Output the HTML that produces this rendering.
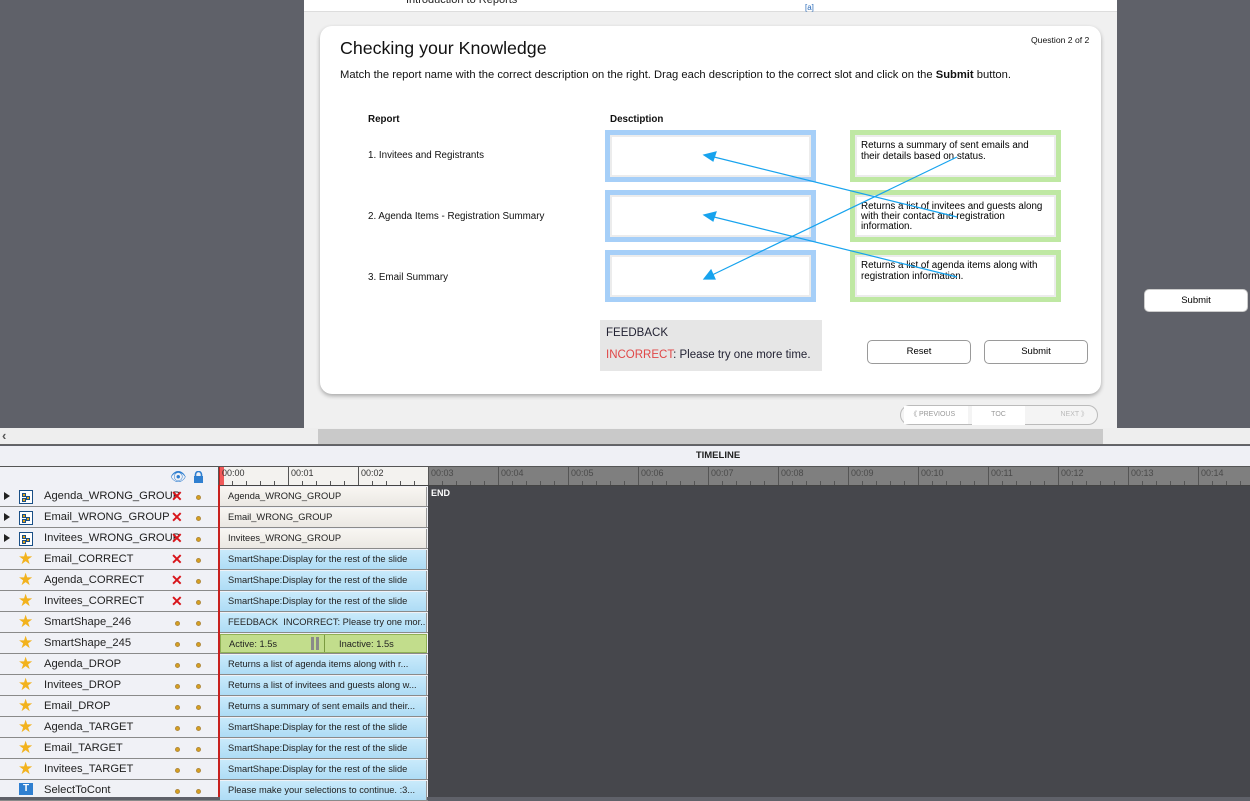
<!DOCTYPE html>
<html><head><meta charset="utf-8"><style>
*{margin:0;padding:0;box-sizing:border-box}
body{width:1250px;height:797px;overflow:hidden;background:#5f6169;font-family:"Liberation Sans",sans-serif;position:relative}
.a{position:absolute}
.row{position:absolute;left:0;width:428px;height:21px;border-bottom:1px solid #8a8a8a}
.nm{position:absolute;left:44px;top:4px;font-size:11.2px;color:#222;white-space:nowrap}
.bar{position:absolute;left:220px;width:207px;top:1px;height:19px;font-size:9.3px;color:#222;padding:4px 0 0 8px;white-space:nowrap;overflow:hidden;border-right:1px solid #999}
.g{background:linear-gradient(#f8f6f2,#ebe8e3)}
.b{background:linear-gradient(#c9eafb,#aedcf5)}
.x{position:absolute;left:171px;top:2px;color:#d8151b;font-size:14px;font-weight:bold}
.d{position:absolute;width:5px;height:5px;border-radius:50%;background:#d9a11d;top:9px;border:1px solid #b08a40}
.st{position:absolute;left:18px;top:1px;color:#f2b21d;font-size:17px;line-height:18px}
.gi{position:absolute;left:19px;top:4px;width:14px;height:14px;border:1.5px solid #1a4f86;background:#fff}
.gi i{position:absolute;width:4px;height:4px;background:#e3a618;border:1px solid #1a4f86}
.tri{position:absolute;left:4px;top:6px;width:0;height:0;border-left:6px solid #222;border-top:4.5px solid transparent;border-bottom:4.5px solid transparent}
.slot{position:absolute;border:5px solid #a6cff8;background:#fff;box-shadow:inset 0 0 0 2px #ececec}
.drag{position:absolute;border:5px solid #bfe8a3;background:#fff;box-shadow:inset 0 0 0 2px #ececec;font-size:9.8px;line-height:11px;color:#000;padding:5px 6px}
.btn{position:absolute;height:24px;border:1px solid #9a9a9a;border-radius:5px;background:#fff;font-size:9.5px;text-align:center;line-height:21px}
</style></head><body>
<div class="a" style="left:304px;top:0;width:813px;height:428px;background:#f0f0f0"></div>
<div class="a" style="left:304px;top:0;width:813px;height:12px;background:#fff;border-bottom:1px solid #ddd"></div>
<div class="a" style="left:406px;top:-6px;font-size:11px;color:#222">Introduction to Reports</div>
<div class="a" style="left:805px;top:3px;font-size:8px;color:#2a6ab8">[a]</div>
<div class="a" style="left:320px;top:26px;width:781px;height:368px;background:#fff;border-radius:12px;box-shadow:0 2px 4px rgba(0,0,0,.3)"></div>
<div class="a" style="left:340px;top:38px;font-size:17.8px;color:#111">Checking your Knowledge</div>
<div class="a" style="left:1031px;top:35px;font-size:8.6px;color:#111">Question 2 of 2</div>
<div class="a" style="left:340px;top:69px;font-size:11.2px;color:#111">Match the report name with the correct description on the right. Drag each description to the correct slot and click on the <b>Submit</b> button.</div>
<div class="a" style="left:368px;top:114px;font-size:9.8px;font-weight:bold;color:#111">Report</div>
<div class="a" style="left:610px;top:114px;font-size:9.8px;font-weight:bold;color:#111">Desctiption</div>
<div class="a" style="left:368px;top:150px;font-size:9.8px;color:#111">1. Invitees and Registrants</div>
<div class="a" style="left:368px;top:211px;font-size:9.8px;color:#111">2. Agenda Items - Registration Summary</div>
<div class="a" style="left:368px;top:272px;font-size:9.8px;color:#111">3. Email Summary</div>
<div class="slot" style="left:605px;top:130px;width:211px;height:52px"></div>
<div class="slot" style="left:605px;top:190px;width:211px;height:52px"></div>
<div class="slot" style="left:605px;top:250px;width:211px;height:52px"></div>
<div class="drag" style="left:850px;top:130px;width:211px;height:52px;padding-right:16px">Returns a summary of sent emails and their details based on status.</div>
<div class="drag" style="left:850px;top:190px;width:211px;height:52px;padding-top:7px;line-height:10px">Returns a list of invitees and guests along with their contact and registration information.</div>
<div class="drag" style="left:850px;top:250px;width:211px;height:52px;padding-right:12px">Returns a list of agenda items along with registration information.</div>
<svg class="a" style="left:0;top:0" width="1250" height="430">
<g stroke="#17a3ee" stroke-width="1.2" fill="#17a3ee">
<line x1="957" y1="217" x2="710" y2="156"/><polygon points="704,155 716,152 713,161"/>
<line x1="957" y1="277" x2="710" y2="216"/><polygon points="704,215 716,212 713,221"/>
<line x1="957" y1="157" x2="710" y2="276"/><polygon points="704,279 711,270 715,279"/>
</g></svg>
<div class="a" style="left:600px;top:320px;width:222px;height:51px;background:#e6e6e6"></div>
<div class="a" style="left:606px;top:327px;font-size:11.5px;color:#223">FEEDBACK</div>
<div class="a" style="left:606px;top:349px;font-size:11.5px;color:#223"><span style="color:#e04848">INCORRECT</span>: Please try one more time.</div>
<div class="btn" style="left:867px;top:340px;width:104px">Reset</div>
<div class="btn" style="left:984px;top:340px;width:104px">Submit</div>
<div class="btn" style="left:1144px;top:289px;width:104px;height:23px;border-color:#ccc">Submit</div>
<div class="a" style="left:900px;top:405px;width:198px;height:20px;border:1px solid #bbb;border-radius:10px;background:#f4f4f4"></div>
<div class="a" style="left:904px;top:406px;width:64px;height:18px;background:#fff;font-size:7px;color:#999;line-height:18px;padding-left:6px">《 PREVIOUS</div>
<div class="a" style="left:972px;top:406px;width:53px;height:19px;background:#fff;font-size:7px;color:#999;line-height:18px;text-align:center">TOC</div>
<div class="a" style="left:1030px;top:406px;width:64px;height:18px;font-size:7px;color:#bbb;line-height:18px;text-align:right;padding-right:6px">NEXT 》</div>
<div class="a" style="left:0;top:428px;width:1250px;height:17px;background:#eeeeee;border-bottom:1px solid #666"></div>
<div class="a" style="left:318px;top:429px;width:785px;height:15px;background:#c9c9c9"></div>
<div class="a" style="left:2px;top:428px;font-size:13px;color:#555;font-weight:bold">‹</div>
<div class="a" style="left:0;top:446px;width:1250px;height:21px;background:#eff0f5;border-bottom:1px solid #555"></div>
<div class="a" style="left:0;top:450px;width:1250px;text-align:center;font-size:9.5px;font-weight:bold;color:#222;padding-left:186px">TIMELINE</div>
<div class="a" style="left:0;top:467px;width:218px;height:330px;background:#f0f1f6"></div>
<div class="a" style="left:218px;top:467px;width:210px;height:330px;background:#f0f1f6"></div>
<div class="a" style="left:428px;top:467px;width:822px;height:330px;background:#46474c"></div>
<div class="a" style="left:218px;top:467px;width:210px;height:19px;background:#f3f2ef;border-bottom:1px solid #444"></div>
<div class="a" style="left:428px;top:467px;width:822px;height:19px;background:#7f7f7f;border-bottom:1px solid #444"></div>
<div class="a" style="left:219px;top:467px;width:5px;height:18px;background:#f05a5a"></div>
<div class="a" style="left:170px;top:470px;color:#2f7fd0;font-size:13px;line-height:13px">&#x1F441;&#xFE0E;</div>
<svg class="a" style="left:193px;top:471px" width="11" height="12"><path d="M2.5 5V3.5a3 3 0 0 1 6 0V5" stroke="#2f7fd0" stroke-width="1.6" fill="none"/><rect x="1" y="5" width="9" height="7" fill="#2f7fd0"/></svg>
<div class="a" style="left:431px;top:488px;font-size:9px;font-weight:bold;color:#fff">END</div>

<div class="row" style="top:486px"><div class="tri"></div><div class="gi"><i style="left:2px;top:2px"></i><i style="left:6px;top:5px"></i><i style="left:2px;top:7px"></i></div><div class="nm">Agenda_WRONG_GROUP</div><div class="x">✕</div><div class="d" style="left:196px"></div><div class="bar g">Agenda_WRONG_GROUP</div></div>
<div class="row" style="top:507px"><div class="tri"></div><div class="gi"><i style="left:2px;top:2px"></i><i style="left:6px;top:5px"></i><i style="left:2px;top:7px"></i></div><div class="nm">Email_WRONG_GROUP</div><div class="x">✕</div><div class="d" style="left:196px"></div><div class="bar g">Email_WRONG_GROUP</div></div>
<div class="row" style="top:528px"><div class="tri"></div><div class="gi"><i style="left:2px;top:2px"></i><i style="left:6px;top:5px"></i><i style="left:2px;top:7px"></i></div><div class="nm">Invitees_WRONG_GROUP</div><div class="x">✕</div><div class="d" style="left:196px"></div><div class="bar g">Invitees_WRONG_GROUP</div></div>
<div class="row" style="top:549px"><div class="st">★</div><div class="nm">Email_CORRECT</div><div class="x">✕</div><div class="d" style="left:196px"></div><div class="bar b">SmartShape:Display for the rest of the slide</div></div>
<div class="row" style="top:570px"><div class="st">★</div><div class="nm">Agenda_CORRECT</div><div class="x">✕</div><div class="d" style="left:196px"></div><div class="bar b">SmartShape:Display for the rest of the slide</div></div>
<div class="row" style="top:591px"><div class="st">★</div><div class="nm">Invitees_CORRECT</div><div class="x">✕</div><div class="d" style="left:196px"></div><div class="bar b">SmartShape:Display for the rest of the slide</div></div>
<div class="row" style="top:612px"><div class="st">★</div><div class="nm">SmartShape_246</div><div class="d" style="left:175px"></div><div class="d" style="left:196px"></div><div class="bar b">FEEDBACK&nbsp; INCORRECT: Please try one mor...</div></div>
<div class="row" style="top:633px"><div class="st">★</div><div class="nm">SmartShape_245</div><div class="d" style="left:175px"></div><div class="d" style="left:196px"></div><div class="bar" style="background:#c2dd8c;border:1px solid #8fb055">Active: 1.5s<span style="position:absolute;left:90px;top:2px;width:8px;height:13px;border-left:3px solid #8a8a8a;border-right:3px solid #8a8a8a"></span><span style="position:absolute;left:103px;top:0;height:19px;border-left:1px solid #7a9a40"></span><span style="position:absolute;left:118px">Inactive: 1.5s</span></div></div>
<div class="row" style="top:654px"><div class="st">★</div><div class="nm">Agenda_DROP</div><div class="d" style="left:175px"></div><div class="d" style="left:196px"></div><div class="bar b">Returns a list of agenda items along with r...</div></div>
<div class="row" style="top:675px"><div class="st">★</div><div class="nm">Invitees_DROP</div><div class="d" style="left:175px"></div><div class="d" style="left:196px"></div><div class="bar b">Returns a list of invitees and guests along w...</div></div>
<div class="row" style="top:696px"><div class="st">★</div><div class="nm">Email_DROP</div><div class="d" style="left:175px"></div><div class="d" style="left:196px"></div><div class="bar b">Returns a summary of sent emails and their...</div></div>
<div class="row" style="top:717px"><div class="st">★</div><div class="nm">Agenda_TARGET</div><div class="d" style="left:175px"></div><div class="d" style="left:196px"></div><div class="bar b">SmartShape:Display for the rest of the slide</div></div>
<div class="row" style="top:738px"><div class="st">★</div><div class="nm">Email_TARGET</div><div class="d" style="left:175px"></div><div class="d" style="left:196px"></div><div class="bar b">SmartShape:Display for the rest of the slide</div></div>
<div class="row" style="top:759px"><div class="st">★</div><div class="nm">Invitees_TARGET</div><div class="d" style="left:175px"></div><div class="d" style="left:196px"></div><div class="bar b">SmartShape:Display for the rest of the slide</div></div>
<div class="row" style="top:780px"><div class="a" style="left:19px;top:3px;width:14px;height:12px;background:#2f7fd0;color:#fff;font-size:10px;font-weight:bold;text-align:center;line-height:12px">T</div><div class="nm">SelectToCont</div><div class="d" style="left:175px"></div><div class="d" style="left:196px"></div><div class="bar b">Please make your selections to continue. :3...</div></div>
<div class="a" style="left:218px;top:467px;width:2px;height:330px;background:#c8201e"></div>

<svg class="a" style="left:218px;top:467px" width="1032" height="19">
<g stroke="#555" stroke-width="1" fill="none">
<path d="M0.5 0V18M70.5 0V18M140.5 0V18M210.5 0V18M280.5 0V18M350.5 0V18M420.5 0V18M490.5 0V18M560.5 0V18M630.5 0V18M700.5 0V18M770.5 0V18M840.5 0V18M910.5 0V18M980.5 0V18"/>
<path d="M14.5 14V18M28.5 14V18M42.5 14V18M56.5 14V18M84.5 14V18M98.5 14V18M112.5 14V18M126.5 14V18M154.5 14V18M168.5 14V18M182.5 14V18M196.5 14V18M224.5 14V18M238.5 14V18M252.5 14V18M266.5 14V18M294.5 14V18M308.5 14V18M322.5 14V18M336.5 14V18M364.5 14V18M378.5 14V18M392.5 14V18M406.5 14V18M434.5 14V18M448.5 14V18M462.5 14V18M476.5 14V18M504.5 14V18M518.5 14V18M532.5 14V18M546.5 14V18M574.5 14V18M588.5 14V18M602.5 14V18M616.5 14V18M644.5 14V18M658.5 14V18M672.5 14V18M686.5 14V18M714.5 14V18M728.5 14V18M742.5 14V18M756.5 14V18M784.5 14V18M798.5 14V18M812.5 14V18M826.5 14V18M854.5 14V18M868.5 14V18M882.5 14V18M896.5 14V18M924.5 14V18M938.5 14V18M952.5 14V18M966.5 14V18M994.5 14V18M1008.5 14V18M1022.5 14V18"/>
</g>
<g font-family="Liberation Sans" font-size="9" fill="#333">
<text x="4" y="9">00:00</text><text x="73" y="9">00:01</text><text x="143" y="9">00:02</text>
</g>
<g font-family="Liberation Sans" font-size="9" fill="#4a4a4a">
<text x="213" y="9">00:03</text><text x="283" y="9">00:04</text><text x="353" y="9">00:05</text><text x="423" y="9">00:06</text><text x="493" y="9">00:07</text><text x="563" y="9">00:08</text><text x="633" y="9">00:09</text><text x="703" y="9">00:10</text><text x="773" y="9">00:11</text><text x="843" y="9">00:12</text><text x="913" y="9">00:13</text><text x="983" y="9">00:14</text>
</g>
</svg>
</body></html>
